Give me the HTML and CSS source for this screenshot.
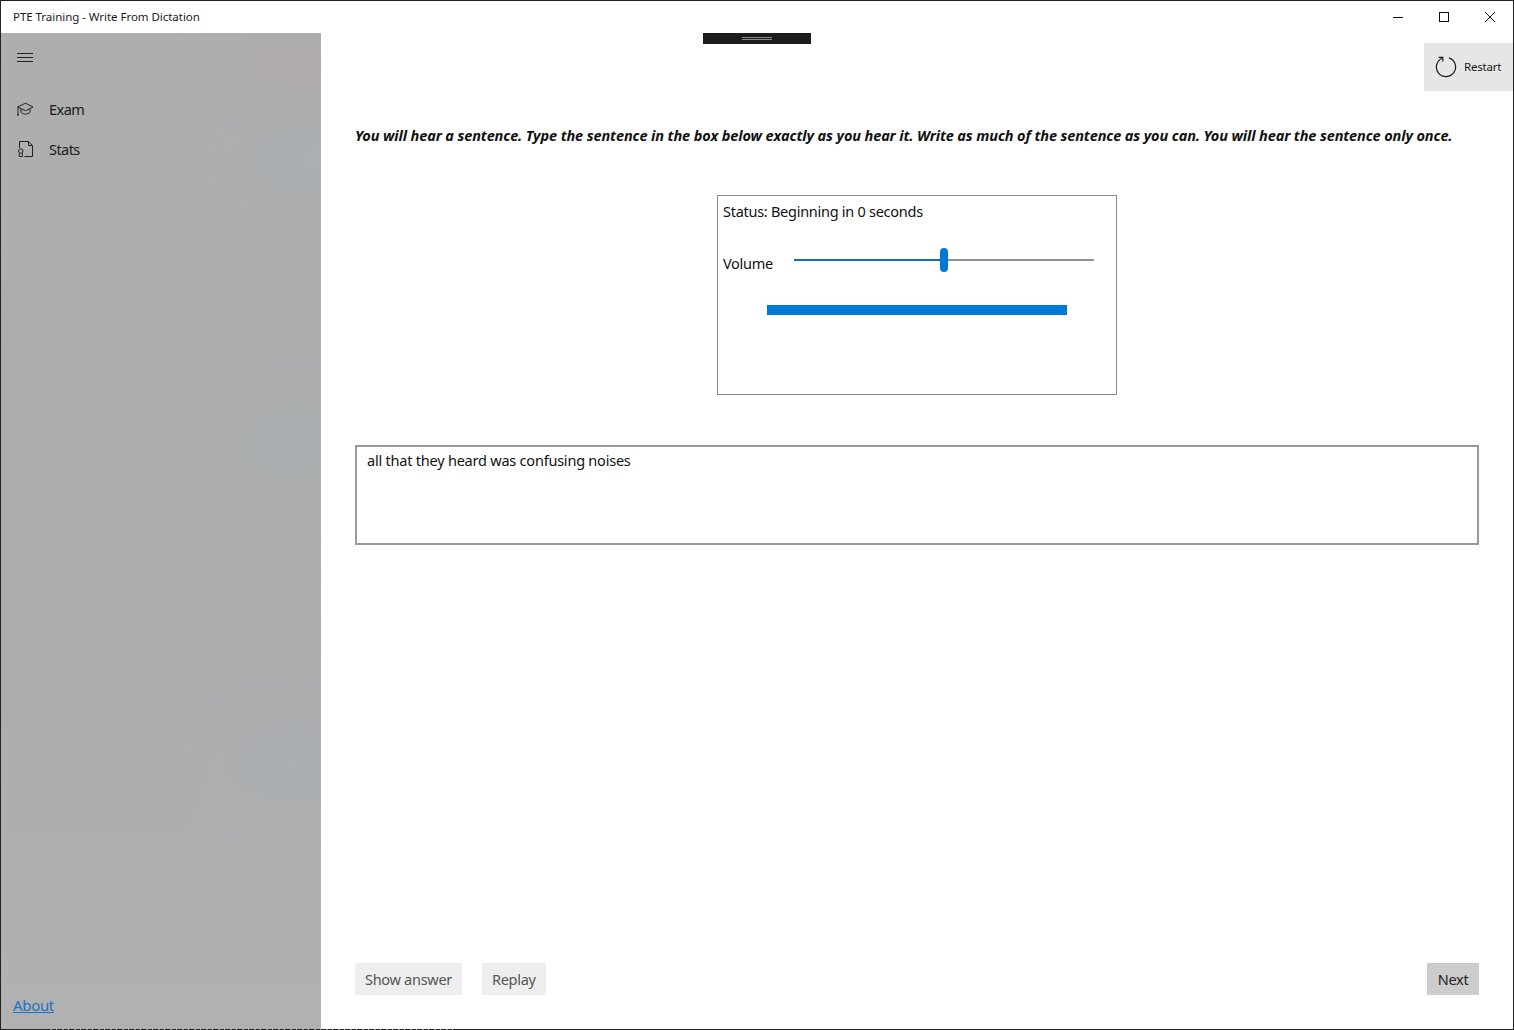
FILE: index.html
```html
<!DOCTYPE html>
<html lang="en">
<head>
<meta charset="utf-8">
<title>PTE Training - Write From Dictation</title>
<link rel="stylesheet" href="styles.css">
</head>
<body>
<div class="window">
  <header class="titlebar">
    <span class="title">PTE Training - Write From Dictation</span>
    <div class="caption">
      <span class="cap-btn"><svg width="12" height="12" viewBox="0 0 12 12"><path d="M1 6.500h10" stroke="#111" fill="none"/></svg></span>
      <span class="cap-btn"><svg width="12" height="12" viewBox="0 0 12 12"><rect x="1.500" y="1.500" width="9" height="9" stroke="#111" fill="none"/></svg></span>
      <span class="cap-btn"><svg width="12" height="12" viewBox="0 0 12 12"><path d="M1 1l10 10M11 1L1 11" stroke="#111" fill="none"/></svg></span>
    </div>
  </header>
  <div class="body-row">
    <aside class="sidebar">
      <div class="hamburger"><svg width="16" height="10" viewBox="0 0 16 10"><path d="M0 .5h16M0 4.500h16M0 8.500h16" stroke="#222" fill="none"/></svg></div>
      <nav class="nav">
        <a class="nav-item"><svg class="nav-icon" width="17" height="16" viewBox="0 0 17 16"><path d="M.6 6 8.500 2.200 16 6l-7.500 3.800zM4 8v3.200c1.800 2.600 7 2.600 9 0V8M1 6.400v6.400" stroke="#222" fill="none"/><rect x=".2" y="12.800" width="1.600" height="2" fill="#222"/></svg><span>Exam</span></a>
        <a class="nav-item"><svg class="nav-icon" width="17" height="16" viewBox="0 0 17 16"><path d="M2.500 7V.5H11.500L15.500 4.500V15.500H7.500M11.500.5V4.500H15.500" stroke="#222" fill="none"/><circle cx="3.800" cy="10" r="2.200" stroke="#222" fill="none"/><path d="M2.200 12.200v3.300h3.200v-3.300" stroke="#222" fill="none"/></svg><span>Stats</span></a>
      </nav>
      <a class="about">About</a>
    </aside>
    <main class="content">
      <div class="handle"><i></i><i></i></div>
      <div class="toolbar">
        <button class="restart">
          <svg width="22" height="22" viewBox="0 0 22 22"><path d="M7.200 2.200A9.600 9.600 0 1 0 14 1.900" stroke="#1a1a1a" stroke-width="1.200" fill="none"/><path d="M3.600 1.400h4.200v4.200" stroke="#1a1a1a" stroke-width="1.200" fill="none"/></svg>
          <span>Restart</span>
        </button>
      </div>
      <div class="inner">
        <p class="instruction">You will hear a sentence. Type the sentence in the box below exactly as you hear it. Write as much of the sentence as you can. You will hear the sentence only once.</p>
        <section class="player">
          <div class="status">Status: Beginning in 0 seconds</div>
          <div class="volume">
            <span class="vol-label">Volume</span>
            <div class="slider">
              <div class="slider-fill"></div>
              <div class="slider-rest"></div>
              <div class="slider-thumb"></div>
            </div>
          </div>
          <div class="progress"></div>
        </section>
        <textarea class="answer" spellcheck="false">all that they heard was confusing noises</textarea>
        <div class="actions">
          <button class="btn">Show answer</button>
          <button class="btn">Replay</button>
          <button class="btn next">Next</button>
        </div>
      </div>
    </main>
  </div>
  <div class="edge-noise"></div>
</div>
</body>
</html>
```

FILE: styles.css
```css
* { box-sizing: border-box; }
html, body { margin: 0; height: 100%; overflow: hidden; }
body { font-family: "Noto Sans", "Open Sans", sans-serif; color: #111; background: #fff; }
.window { position: relative; width: 1514px; height: 1030px; border: 1px solid #222; display: flex; flex-direction: column; background: #fff; }
.titlebar { height: 32px; flex: none; display: flex; align-items: center; justify-content: space-between; padding: 0 0 2px 12px; }
.title { font-size: 11.5px; letter-spacing: -.04px; color: #1a1a1a; }
.caption { display: flex; margin-bottom: -2px; }
.cap-btn { width: 46px; height: 32px; display: flex; align-items: center; justify-content: center; }
.body-row { flex: 1; display: flex; min-height: 0; }
.sidebar { width: 320px; flex: none; display: flex; flex-direction: column; padding-bottom: 14px;
  background:
    radial-gradient(ellipse 170px 90px at 320px 125px, rgba(168,178,184,.45), transparent),
    radial-gradient(ellipse 150px 110px at 290px 410px, rgba(168,178,184,.4), transparent),
    radial-gradient(ellipse 150px 110px at 290px 730px, rgba(168,178,186,.4), transparent),
    radial-gradient(ellipse 180px 80px at 290px 30px, rgba(176,168,168,.55), transparent),
    radial-gradient(ellipse 120px 80px at 320px 540px, rgba(178,170,170,.4), transparent),
    linear-gradient(180deg, #aeaeae, #acacac 60%, #b1b1b1);
}
.hamburger { height: 48px; padding: 20px 0 0 16px; line-height: 0; }
.nav { display: flex; flex-direction: column; padding-top: 8px; }
.nav-item { height: 40px; display: flex; align-items: center; gap: 15px; padding-left: 16px; font-size: 14.5px; letter-spacing: -.55px; color: #1a1a1a; }
.nav-icon { flex: none; }
.about { margin-top: auto; margin-left: 12px; font-size: 15px; letter-spacing: -.33px; color: #1a73c4; text-decoration: underline; }
.content { flex: 1; position: relative; display: flex; flex-direction: column; min-width: 0; }
.handle { position: absolute; left: 382px; top: 0; width: 108px; height: 11px; background: #1b1b1b; display: flex; flex-direction: column; align-items: center; justify-content: center; gap: 1px; }
.handle i { display: block; width: 30px; height: 1px; background: #8a8a8a; }
.toolbar { display: flex; justify-content: flex-end; padding-top: 10px; }
.restart { width: 89px; height: 48px; border: 0; background: #e6e6e6; display: flex; align-items: center; gap: 7px; padding: 0 0 0 11px; font: 11.5px "Noto Sans", sans-serif; letter-spacing: -.2px; color: #1a1a1a; }
.restart span { margin-top: -2px; }
.inner { flex: 1; display: flex; flex-direction: column; padding: 32px 34px 34px 34px; min-height: 0; }
.instruction { margin: 0; font-size: 14.5px; line-height: 24px; font-weight: 700; font-style: italic; letter-spacing: -.117px; white-space: nowrap; color: #111; }
.player { width: 400px; height: 200px; margin: 48px auto 0; border: 1px solid #8c8c8c; padding: 5px; }
.status { font-size: 14.5px; line-height: 21px; letter-spacing: -.27px; }
.volume { display: flex; margin-top: 31px; }
.vol-label { width: 71px; font-size: 14.5px; line-height: 21px; letter-spacing: -.3px; }
.slider { position: relative; width: 300px; height: 24px; margin-top: -5px; display: flex; align-items: center; }
.slider-fill { width: 150px; height: 2px; background: #0f6fc6; }
.slider-rest { flex: 1; height: 2px; background: #929292; }
.slider-thumb { position: absolute; left: 146px; top: 0; width: 8px; height: 24px; border-radius: 4px; background: #0078d7; }
.progress { width: 300px; height: 10px; margin: 31px auto 0; background: #0078d7; }
.answer { display: block; width: 100%; height: 100px; margin-top: 50px; border: 2px solid #999; border-radius: 0; padding: 2px 10px; resize: none; outline: 0; font: 14.5px/22px "Noto Sans", sans-serif; letter-spacing: -.22px; color: #111; overflow: hidden; }
.actions { margin-top: auto; display: flex; gap: 20px; }
.btn { height: 32px; border: 0; padding: 0 10px; background: #eee; font: 14.5px "Noto Sans", sans-serif; letter-spacing: -.29px; color: #555; }
.next { margin-left: auto; width: 52px; padding: 0; background: #ccc; color: #222; }
.edge-noise { position: absolute; left: 44px; bottom: -1px; width: 412px; height: 1px; background: repeating-linear-gradient(90deg, transparent 0 5px, #8e8e8e 5px 7px, transparent 7px 11px, #bbb 11px 12px); }
```
